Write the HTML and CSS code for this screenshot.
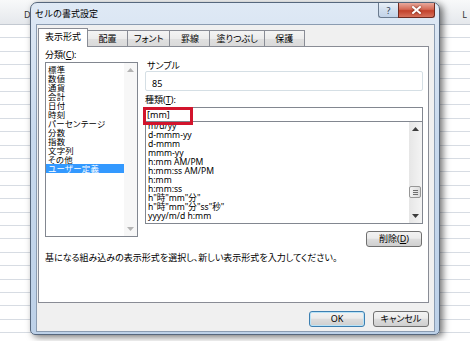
FILE: index.html
```html
<!DOCTYPE html>
<html lang="ja">
<head>
    <meta charset="UTF-8">
    <title>セルの書式設定</title>
    <link rel="stylesheet" href="styles.css">
</head>
<body>

    <!-- Spreadsheet behind the dialog -->
    <div class="sheet">
        <div class="col-header">
            <span class="col col-d">D</span>
            <span class="col col-l">L</span>
        </div>
        <div class="rows"></div>
    </div>

    <!-- Format Cells dialog -->
    <div class="dialog">
        <div class="titlebar">
            <span class="title">セルの書式設定</span>
            <div class="caption-buttons">
                <span class="cap-btn help">?</span>
                <span class="cap-btn close">
                    <svg width="9" height="8" viewBox="0 0 9 8"><path d="M1 1 L8 7 M8 1 L1 7" stroke="#fff" stroke-width="2" stroke-linecap="square"/></svg>
                </span>
            </div>
        </div>

        <div class="client">
            <div class="tabs">
                <span class="tab active">表示形式</span>
                <span class="tab">配置</span>
                <span class="tab">フォント</span>
                <span class="tab">罫線</span>
                <span class="tab">塗りつぶし</span>
                <span class="tab">保護</span>
            </div>

            <div class="panel">
                <div class="form">
                    <div class="col-left">
                        <div class="field-label">分類(<u>C</u>):</div>
                        <div class="listbox category-list">
                            <div class="items">
                                <div class="item">標準</div>
                                <div class="item">数値</div>
                                <div class="item">通貨</div>
                                <div class="item">会計</div>
                                <div class="item">日付</div>
                                <div class="item">時刻</div>
                                <div class="item">パーセンテージ</div>
                                <div class="item">分数</div>
                                <div class="item">指数</div>
                                <div class="item">文字列</div>
                                <div class="item">その他</div>
                                <div class="item selected">ユーザー定義</div>
                            </div>
                            <div class="vscroll disabled">
                                <span class="arrow"><svg width="7" height="4" viewBox="0 0 7 4"><path d="M0 4 L3.5 0 L7 4 Z" fill="#b4b4b4"/></svg></span>
                                <span class="arrow"><svg width="7" height="4" viewBox="0 0 7 4"><path d="M0 0 L3.5 4 L7 0 Z" fill="#b4b4b4"/></svg></span>
                            </div>
                        </div>
                    </div>

                    <div class="col-right">
                        <div class="sample">
                            <span class="sample-title">サンプル</span>
                            <div class="sample-box">85</div>
                        </div>

                        <div class="field-label type-label">種類(<u>T</u>):</div>
                        <div class="type-input">
                            [mm]
                            <span class="highlight"></span>
                        </div>
                        <div class="listbox format-list">
                            <div class="items">
                                <div class="item">m/d/yy</div>
                                <div class="item">d-mmm-yy</div>
                                <div class="item">d-mmm</div>
                                <div class="item">mmm-yy</div>
                                <div class="item">h:mm AM/PM</div>
                                <div class="item">h:mm:ss AM/PM</div>
                                <div class="item">h:mm</div>
                                <div class="item">h:mm:ss</div>
                                <div class="item">h"時"mm"分"</div>
                                <div class="item">h"時"mm"分"ss"秒"</div>
                                <div class="item">yyyy/m/d h:mm</div>
                            </div>
                            <div class="vscroll">
                                <span class="arrow"><svg width="7" height="4" viewBox="0 0 7 4"><path d="M0 4 L3.5 0 L7 4 Z" fill="#3c3c3c"/></svg></span>
                                <div class="track"><span class="thumb"><i></i><i></i><i></i></span></div>
                                <span class="arrow"><svg width="7" height="4" viewBox="0 0 7 4"><path d="M0 0 L3.5 4 L7 0 Z" fill="#3c3c3c"/></svg></span>
                            </div>
                        </div>
                        <button class="btn delete">削除(<u>D</u>)</button>
                    </div>
                </div>

                <p class="hint">基になる組み込みの表示形式を選択し、新しい表示形式を入力してください。</p>
            </div>

            <div class="actions">
                <button class="btn default">OK</button>
                <button class="btn">キャンセル</button>
            </div>
        </div>
    </div>

</body>
</html>
```

FILE: styles.css
```css
body {
    margin: 0;
    width: 470px;
    height: 341px;
    overflow: hidden;
    position: relative;
    background: #fff;
    font-family: 'Noto Sans', 'Noto Sans CJK JP', sans-serif;
    font-size: 9px;
    font-feature-settings: "palt";
    color: #000;
}

/* Spreadsheet in the background */
.col-header {
    height: 25px;
    box-sizing: border-box;
    display: flex;
    align-items: flex-end;
    padding-bottom: 3px;
    background: linear-gradient(#f8f9fa, #e5e8ec);
    border-bottom: 1px solid #c3c9d1;
    color: #333;
}

.col-d {
    margin-left: 24px;
}

.col-l {
    margin-left: auto;
    margin-right: 3px;
}

.rows {
    height: 316px;
    background: repeating-linear-gradient(to bottom, transparent 0, transparent 12.4px, #d7dce3 12.4px, #d7dce3 13.4px);
}

/* Dialog window */
.dialog {
    position: absolute;
    left: 30px;
    top: 2px;
    width: 410px;
    height: 333px;
    box-sizing: border-box;
    display: flex;
    flex-direction: column;
    border: 1px solid #56677d;
    border-radius: 7px 7px 5px 5px;
    background: linear-gradient(#dfe9f5, #c8d9ed 40%, #bdd1e8);
    box-shadow: 3px 2px 7px rgba(0, 0, 0, 0.55);
}

.titlebar {
    height: 21px;
    flex: none;
    display: flex;
    align-items: flex-start;
    padding: 0 4px;
}

.title {
    line-height: 21px;
    font-size: 9px;
    font-feature-settings: normal;
}

.caption-buttons {
    margin-left: auto;
    display: flex;
}

.cap-btn {
    height: 15px;
    box-sizing: border-box;
    display: flex;
    align-items: center;
    justify-content: center;
    border: 1px solid #6b7b8f;
    border-top: none;
}

.help {
    width: 20px;
    border-radius: 0 0 0 3px;
    border-right: none;
    background: linear-gradient(#e9f0f8, #d2dfee 50%, #c2d3e8);
    color: #2c3a4c;
    font-size: 9px;
}

.close {
    width: 37px;
    border-color: #6e2a20;
    border-radius: 0 0 3px 0;
    background: linear-gradient(#e9a99c, #d46a56 45%, #c2412b 55%, #d7715c);
}

.close svg {
    filter: drop-shadow(0 0 1px rgba(80, 20, 10, 0.8));
}

.client {
    flex: 1;
    margin: 0 4px 2px 5px;
    border: 1px solid #8b9cb1;
    background: #f0f0f0;
    padding: 3px 0 0 1px;
}

/* Tabs */
.tabs {
    display: flex;
    align-items: flex-end;
    height: 19px;
    margin-bottom: -1px;
    position: relative;
    z-index: 1;
}

.tab {
    height: 16px;
    min-width: 41px;
    box-sizing: border-box;
    margin-bottom: 1px;
    margin-left: -1px;
    padding: 0 6px;
    border: 1px solid #898c95;
    border-bottom: none;
    background: linear-gradient(#f4f4f4, #ececec 50%, #e0e0e0 50%, #dadada);
    line-height: 15px;
    text-align: center;
}

.tab.active {
    height: 19px;
    margin-bottom: 0;
    margin-left: 0;
    background: #fff;
    line-height: 16px;
}

.panel {
    width: 391px;
    height: 257px;
    box-sizing: border-box;
    border: 1px solid #898c95;
    background: #fff;
    padding: 3px 4px 0 6px;
}

.form {
    display: grid;
    grid-template-columns: 93px 278px;
    column-gap: 7px;
    align-items: start;
}

.field-label {
    line-height: 10px;
    margin-bottom: 2px;
}

/* List boxes */
.listbox {
    display: flex;
    box-sizing: border-box;
    border: 1px solid #828790;
    background: #fff;
    overflow: hidden;
}

.items {
    flex: 1;
    min-width: 0;
}

.item {
    line-height: 9px;
    height: 9px;
    padding-left: 2px;
    white-space: nowrap;
}

.item.selected {
    background: #3399ff;
    color: #fff;
}

.category-list {
    height: 175px;
}

.category-list .items {
    padding-top: 2px;
}

.category-list .item {
    font-size: 8.4px;
    letter-spacing: 0.3px;
}

.vscroll {
    width: 13px;
    flex: none;
    display: flex;
    flex-direction: column;
    justify-content: space-between;
    background: linear-gradient(to right, #e6e6e6, #f4f4f4);
}

.vscroll.disabled {
    background: #f7f7f7;
}

.arrow {
    height: 14px;
    display: flex;
    align-items: center;
    justify-content: center;
}

.track {
    flex: 1;
}

.thumb {
    display: flex;
    flex-direction: column;
    align-items: center;
    justify-content: center;
    gap: 1px;
    height: 12px;
    margin: 50px 1px 0 0;
    box-sizing: border-box;
    border: 1px solid #979797;
    border-radius: 2px;
    background: linear-gradient(to right, #f2f2f2, #dcdcdc);
}

.thumb i {
    width: 5px;
    height: 1px;
    background: #6f6f6f;
}

/* Right column */
.sample {
    margin-top: 10px;
    line-height: 11px;
}

.sample-title {
    display: inline-block;
    vertical-align: top;
    margin-left: 1px;
    margin-bottom: -3px;
    padding: 0 1px;
    background: #fff;
}

.sample-box {
    height: 20px;
    box-sizing: border-box;
    border: 1px solid #d5dfe5;
    border-radius: 2px;
    padding: 6px 0 0 6px;
}

.type-label {
    margin-top: 4px;
}

.type-input {
    position: relative;
    height: 15px;
    box-sizing: border-box;
    border: 1px solid #828790;
    padding-left: 1px;
    line-height: 13px;
}

.highlight {
    position: absolute;
    left: -3px;
    top: -1px;
    width: 50px;
    height: 18px;
    box-sizing: border-box;
    border: 3px solid #d2142c;
}

.format-list {
    height: 102px;
    border-top: none;
}

.format-list .item {
    font-size: 8.6px;
}

/* Buttons */
.btn {
    display: block;
    width: 56px;
    height: 16px;
    box-sizing: border-box;
    padding: 0;
    border: 1px solid #707070;
    border-radius: 3px;
    background: linear-gradient(#f2f2f2, #ebebeb 45%, #dddddd 50%, #cfcfcf);
    font-family: inherit;
    font-size: 9px;
    font-feature-settings: "palt";
    line-height: 14px;
    color: #000;
}

.btn.default {
    border-color: #3c7fb1;
    box-shadow: inset 0 0 0 1px #b9e3f7;
}

.delete {
    justify-self: end;
    margin-top: 7px;
    margin-right: 1px;
}

.hint {
    margin: 6px 0 0;
    line-height: 10px;
}

.actions {
    display: flex;
    justify-content: flex-end;
    gap: 8px;
    margin-top: 8px;
    padding-right: 5px;
}
```
